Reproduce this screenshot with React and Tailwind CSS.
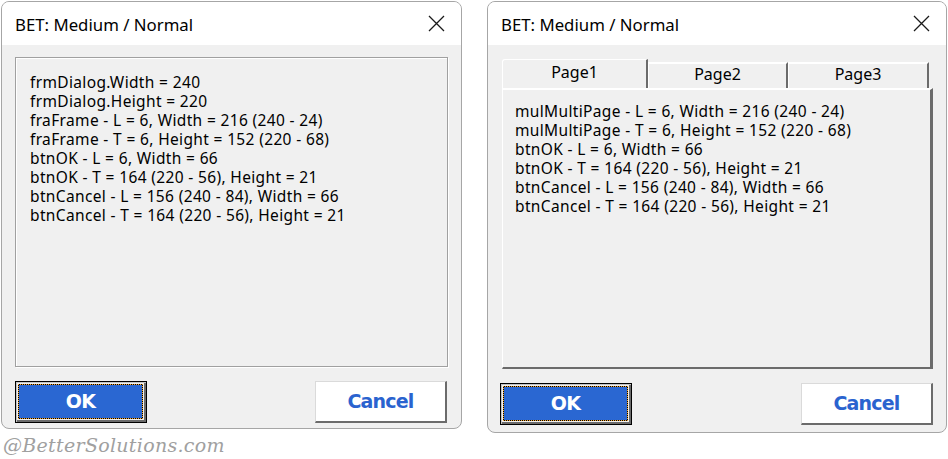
const uiFont = { fontFamily: '"Noto Sans", "Open Sans", sans-serif' };
const btnFont = { fontFamily: '"DejaVu Sans", Verdana, sans-serif' };

const frameLines = [
  "frmDialog.Width = 240",
  "frmDialog.Height = 220",
  "fraFrame - L = 6, Width = 216 (240 - 24)",
  "fraFrame - T = 6, Height = 152 (220 - 68)",
  "btnOK - L = 6, Width = 66",
  "btnOK - T = 164 (220 - 56), Height = 21",
  "btnCancel - L = 156 (240 - 84), Width = 66",
  "btnCancel - T = 164 (220 - 56), Height = 21",
];

const pageLines = [
  "mulMultiPage - L = 6, Width = 216 (240 - 24)",
  "mulMultiPage - T = 6, Height = 152 (220 - 68)",
  "btnOK - L = 6, Width = 66",
  "btnOK - T = 164 (220 - 56), Height = 21",
  "btnCancel - L = 156 (240 - 84), Width = 66",
  "btnCancel - T = 164 (220 - 56), Height = 21",
];

function CloseIcon() {
  return (
    <svg width="17" height="17" viewBox="0 0 17 17">
      <path d="M1 1 L16 16 M16 1 L1 16" stroke="#1a1a1a" strokeWidth="1.3" />
    </svg>
  );
}

function TitleBar() {
  return (
    <div className="h-[43px] bg-white flex items-center justify-between pl-[13px] pr-[16px]">
      <span className="text-[16.8px] text-black pt-[2px]" style={uiFont}>
        BET: Medium / Normal
      </span>
      <CloseIcon />
    </div>
  );
}

function OkButton() {
  return (
    <div className="w-[132px] h-[42px] border border-black shadow-[inset_1px_1px_0_#c4c4c4,inset_-2px_-2px_0_#6b6b6b] p-[2px] pr-[3px] pb-[3px]">
      <div className="w-full h-full bg-black">
        <div className="w-full h-full border border-dotted border-[#f2a431] bg-clip-padding bg-[#2a67d2] flex items-center justify-center">
          <span className="text-white font-bold text-[19px] tracking-[-0.6px]" style={btnFont}>
            OK
          </span>
        </div>
      </div>
    </div>
  );
}

function CancelButton() {
  return (
    <div className="w-[132px] h-[42px] bg-white border-t border-l border-[#dadada] border-r-2 border-b-2 border-r-[#6b6b6b] border-b-[#6b6b6b] flex items-center justify-center">
      <span className="text-[#2a63cf] font-bold text-[19px] tracking-[-0.8px]" style={btnFont}>
        Cancel
      </span>
    </div>
  );
}

function Lines({ items }) {
  return (
    <div className="text-[15.5px] leading-[19px] tracking-[0.35px] text-black" style={uiFont}>
      {items.map((l) => (
        <div key={l}>{l}</div>
      ))}
    </div>
  );
}

function FrameDialog() {
  return (
    <div className="w-[461px] h-[430px] border border-[#a6a6a6] rounded-[8px] overflow-hidden flex flex-col bg-[#f0f0f0]">
      <TitleBar />
      <div className="flex-1 px-[13px] pt-[12px]">
        <div className="h-[310px] border border-[#a0a0a0] shadow-[1px_1px_0_#fff,inset_1px_1px_0_#fff] pl-[14px] pt-[15px]">
          <Lines items={frameLines} />
        </div>
        <div className="flex justify-between mt-[14px] pr-[1px]">
          <OkButton />
          <CancelButton />
        </div>
      </div>
    </div>
  );
}

function Tab({ label, active, w }) {
  return (
    <div
      className={
        active
          ? "h-[29px] border-t border-l border-white rounded-tl-[3px] border-r-2 border-r-[#6b6b6b] flex items-start justify-center pt-[2px] -mb-[1px] z-10 bg-[#f0f0f0]"
          : "h-[26px] mt-[3px] border-t-2 border-t-white border-l border-l-white border-r-2 border-r-[#6b6b6b] flex items-start justify-center"
      }
      style={{ width: w }}
    >
      <span className="text-[16px] leading-[21px] text-black" style={uiFont}>
        {label}
      </span>
    </div>
  );
}

function MultiPageDialog() {
  return (
    <div className="w-[460px] h-[432px] border border-[#a6a6a6] rounded-[8px] overflow-hidden flex flex-col bg-[#f0f0f0]">
      <TitleBar />
      <div className="flex-1 pl-[14px] pr-[13px] pt-[14px]">
        <div className="flex relative">
          <Tab label="Page1" active w={146} />
          <Tab label="Page2" w={140} />
          <Tab label="Page3" w={141} />
        </div>
        <div className="h-[281px] border-t-2 border-t-white border-l border-l-white border-r-[3px] border-r-[#6b6b6b] border-b-2 border-b-[#6b6b6b] pl-[12px] pt-[12px]">
          <Lines items={pageLines} />
        </div>
        <div className="flex justify-between mt-[14px] -ml-[2px]">
          <OkButton />
          <CancelButton />
        </div>
      </div>
    </div>
  );
}

export default function App() {
  return (
    <div className="w-[948px] h-[459px] bg-white flex pl-[1px] pt-[1px] gap-[25px] overflow-hidden">
      <div className="flex flex-col">
        <FrameDialog />
        <span
          className="text-[19px] italic font-light text-[#a0a0a0] tracking-[0.3px] mt-[2px] ml-[2px]"
          style={{ fontFamily: '"DejaVu Serif", serif' }}
        >
          @BetterSolutions.com
        </span>
      </div>
      <MultiPageDialog />
    </div>
  );
}
